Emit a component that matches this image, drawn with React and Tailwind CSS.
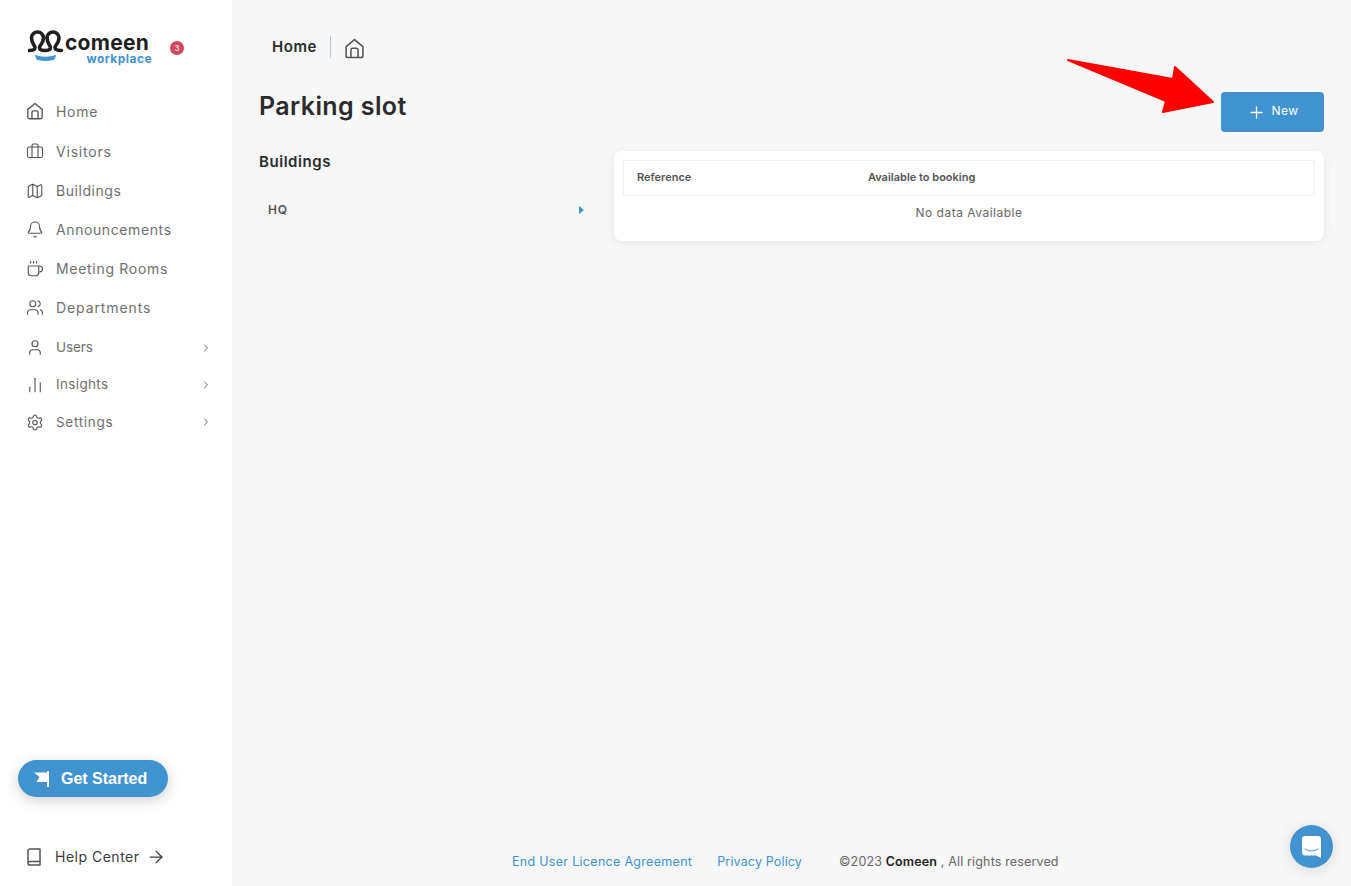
import React from "react";
import { Briefcase, Map, Bell, Coffee, Users, User, BarChart2, Settings, ChevronRight, Plus, ArrowRight } from "lucide-react";

function HomeIcon({ size = 18 }) {
  return (
    <svg width={size} height={size} viewBox="0 0 20 20" fill="none" stroke="currentColor" strokeWidth="1.5" strokeLinejoin="round">
      <path d="M2 8.2 10 1.6l8 6.6v8.6a1.8 1.8 0 0 1-1.8 1.8H3.8A1.8 1.8 0 0 1 2 16.8z" />
      <path d="M6.600 18.400v-7a1.600 1.600 0 0 1 1.600-1.600h3.600a1.600 1.600 0 0 1 1.600 1.600v7" />
    </svg>
  );
}

function Book() {
  return (
    <svg width="16" height="18" viewBox="0 0 16 18" fill="none" stroke="currentColor" strokeWidth="1.500" strokeLinejoin="round">
      <path d="M2 14.500V2.600A1.600 1.600 0 0 1 3.600 1H14v16H3.800A1.800 1.800 0 0 1 2 15.200c0-1 .8-1.800 1.800-1.800H14" />
    </svg>
  );
}

function Logo() {
  return (
    <div className="relative w-[124px] h-[36px]">
      <svg width="36" height="34" viewBox="0 0 36 34" className="absolute left-0 top-0" fill="none">
        <path d="M1 20.500C4 20.500 7 20 7 17.500C7 15.500 3.500 13 3.500 8A6 6 0 0 1 15.500 8C15.500 13 11.500 15.500 11.500 17.500C11.500 20 14 20.500 17 20.500C19.500 20.500 22.500 20 22.500 17.500C22.500 15.500 19 13 19 8A6 6 0 0 1 31 8C31 13 27 15.500 27 17.500C27 20 30 20.500 33.500 20.500" stroke="#1f1f1f" strokeWidth="3.600" strokeLinecap="round" strokeLinejoin="round" />
        <path d="M7.500 25.500c6 2.200 14 2.200 20 0l-1.500 3.800c-5.500 1.500-11.500 1.500-17 0z" fill="#4193d0" stroke="#4193d0" strokeWidth="1" strokeLinejoin="round" />
      </svg>
      <span className="absolute left-[37px] top-[5px] text-[21px] leading-[16px] font-bold text-[#1f1f1f] tracking-[0.25px]">comeen</span>
      <span className="absolute right-0 top-[24px] text-[12px] leading-[10px] font-bold text-[#4193d0] tracking-[0.45px]">workplace</span>
    </div>
  );
}

const items = [
  { label: "Home", icon: <HomeIcon size={18} />, h: "h-[40px] pb-[2px]", t: "text-[14px] tracking-[0.7px]" },
  { label: "Visitors", icon: <Briefcase size={19} strokeWidth={1.5} />, h: "h-[39px]", t: "text-[14px] tracking-[0.8px]" },
  { label: "Buildings", icon: <Map size={20} strokeWidth={1.5} />, h: "h-[39px]", t: "text-[14px] tracking-[0.55px]" },
  { label: "Announcements", icon: <Bell size={19} strokeWidth={1.5} />, h: "h-[39px]", t: "text-[14px] tracking-[0.6px]" },
  { label: "Meeting Rooms", icon: <Coffee size={20} strokeWidth={1.5} />, h: "h-[39px]", t: "text-[14px] tracking-[0.7px]" },
  { label: "Departments", icon: <Users size={19} strokeWidth={1.5} />, h: "h-[39px]", t: "text-[14px] tracking-[0.9px]" },
  { label: "Users", icon: <User size={19} strokeWidth={1.5} />, h: "h-[39px] pt-[2px]", chev: true, t: "text-[13.500px] tracking-[-0.1px]" },
  { label: "Insights", icon: <BarChart2 size={18} strokeWidth={1.5} />, h: "h-[37px]", chev: true, t: "text-[13.500px] tracking-[0.35px]" },
  { label: "Settings", icon: <Settings size={19} strokeWidth={1.5} />, h: "h-[38px]", chev: true, t: "text-[13.500px] tracking-[0.7px]" },
];

export default function App() {
  return (
    <div className="relative flex h-[886px] w-full overflow-hidden bg-[#f7f7f7] font-['Inter',sans-serif] text-[#2b2b2b]">
      <aside className="w-[232px] shrink-0 bg-white flex flex-col">
        <div className="flex items-start pl-[28px] pt-[30px] h-[92px]">
          <Logo />
          <span className="ml-[18px] mt-[11px] w-[14px] h-[14px] rounded-full bg-[#d0445c] text-white text-[8px] leading-[14px] text-center">3</span>
        </div>
        <nav className="flex flex-col">
          {items.map((it) => (
            <div key={it.label} className={`${it.h} flex items-center pl-[26px] pr-[20px] text-[#6f6f6f]`}>
              <span className="w-[18px] flex justify-center text-[#555]">{it.icon}</span>
              <span className={`ml-[12px] flex-1 ${it.t}`}>{it.label}</span>
              {it.chev && <ChevronRight size={12} strokeWidth={1.8} className="text-[#555]" />}
            </div>
          ))}
        </nav>
        <div className="mt-auto pl-[18px]">
          <button className="h-[37px] w-[150px] rounded-full bg-[#4193d0] text-white flex items-center pl-[16px] shadow-[0_4px_14px_rgba(0,0,0,0.18)] font-['Liberation_Sans',sans-serif] font-bold text-[16px]">
            <svg width="15" height="16" viewBox="0 0 15 16" fill="white"><path d="M0 1.500h13V0h2v16h-2v-5H2.500L5.500 6z" /></svg>
            <span className="ml-[12px]">Get Started</span>
          </button>
        </div>
        <div className="mt-[49px] mb-[19px] pl-[26px] flex items-center text-[#3a3a3a] text-[14px] tracking-[0.5px]">
          <span className="text-[#555] flex"><Book /></span>
          <span className="ml-[13px]">Help Center</span>
          <ArrowRight size={20} strokeWidth={1.5} className="ml-[6px]" />
        </div>
      </aside>

      <main className="flex-1 flex flex-col pl-[27px] pr-[27px] min-w-0">
        <div className="flex items-center h-[24px] mt-[35px] pl-[13px]">
          <span className="text-[15px] font-semibold text-[#2b2b2b] tracking-[0.55px]">Home</span>
          <span className="ml-[13px] w-px h-[22px] bg-[#b9c6d4]" />
          <span className="ml-[13px] mt-[2px] text-[#555] flex"><HomeIcon size={21} /></span>
        </div>
        <div className="flex items-start justify-between mt-[33px]">
          <h1 className="text-[25px] leading-[28px] font-semibold text-[#2b2b2b] tracking-[0.4px]">Parking slot</h1>
          <button className="w-[103px] h-[40px] rounded-[4px] bg-[#4193d0] text-white flex items-center justify-center gap-[6px] text-[12px] tracking-[0.4px]">
            <Plus size={19} strokeWidth={1.6} />
            <span className="mt-[-2px]">New</span>
          </button>
        </div>
        <div className="flex mt-[19px] items-start">
          <div className="w-[355px] shrink-0 pt-[1px]">
            <div className="text-[15px] leading-[20px] font-semibold text-[#2b2b2b] tracking-[0.55px]">Buildings</div>
            <div className="flex items-center justify-between mt-[28px] pl-[9px] pr-[30px] h-[20px]">
              <span className="text-[12px] font-semibold text-[#555] tracking-[0.8px]">HQ</span>
              <span className="w-0 h-0 border-y-[4px] border-y-transparent border-l-[5px] border-l-[#4193d0]" />
            </div>
          </div>
          <div className="flex-1 bg-white rounded-[8px] shadow-[0_2px_10px_rgba(0,0,0,0.07)] px-[9px] pt-[9px] pb-[11px]">
            <div className="flex items-center h-[36px] pb-[2px] border border-[#f1f1f1] pl-[13px] text-[11px] font-semibold text-[#555]">
              <span className="w-[231px]">Reference</span>
              <span>Available to booking</span>
            </div>
            <div className="h-[34px] flex items-center justify-center text-[12px] text-[#666] tracking-[0.5px]">No data Available</div>
          </div>
        </div>
        <footer className="mt-auto mb-[16px] ml-[253px] flex items-center text-[12.500px] leading-[16px] whitespace-nowrap">
          <span className="text-[#4193d0] tracking-[0.3px]">End User Licence Agreement</span>
          <span className="ml-[25px] text-[#4193d0] tracking-[0.15px]">Privacy Policy</span>
          <span className="ml-[37px] text-[#666] tracking-[0.15px]">©2023 <b className="font-semibold text-[#222]">Comeen</b> , All rights reserved</span>
        </footer>
      </main>

      <svg width="160" height="56" viewBox="0 0 160 56" className="absolute left-[1065px] top-[58px]">
        <path d="M3 2 L108 21 L110 9 L148 44 L98 54 L101 43 Z" fill="#ff0000" stroke="#ff0000" strokeWidth="2" strokeLinejoin="round" />
      </svg>

      <div className="absolute left-[1290px] top-[825px] w-[43px] h-[43px] rounded-full bg-[#4193d0] flex items-center justify-center shadow-[0_2px_16px_rgba(0,0,0,0.12)]">
        <svg width="19" height="22" viewBox="0 0 19 22">
          <path d="M3 0h13a3 3 0 0 1 3 3v19l-5-2.500H3a3 3 0 0 1-3-3V3a3 3 0 0 1 3-3z" fill="white" />
          <path d="M3 13c4 2.500 9 2.500 13 0" fill="none" stroke="#4193d0" strokeWidth="1" strokeLinecap="round" />
        </svg>
      </div>
    </div>
  );
}
